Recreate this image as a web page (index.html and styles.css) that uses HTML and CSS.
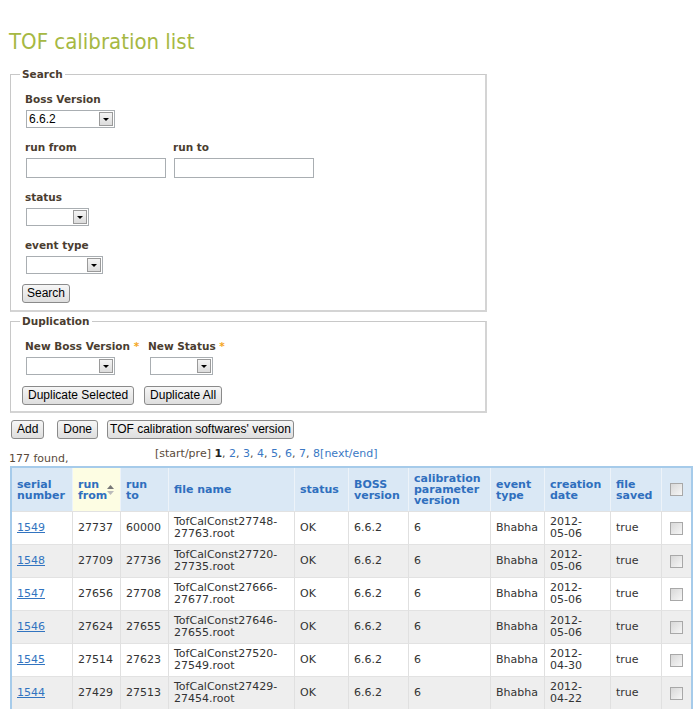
FILE: index.html
```html
<!DOCTYPE html>
<html lang="en">
<head>
<meta charset="utf-8">
<title>TOF calibration list</title>
<link rel="stylesheet" href="styles.css">
</head>
<body>
<h1 class="title">TOF calibration list</h1>

<fieldset class="box search">
  <legend>Search</legend>
  <div class="field">
    <label>Boss Version</label>
    <span class="sel sel-boss"><span class="sel-val">6.6.2</span><span class="sel-btn"></span></span>
  </div>
  <div class="field pair">
    <div class="col">
      <label>run from</label>
      <input class="txt" type="text">
    </div>
    <div class="col">
      <label>run to</label>
      <input class="txt" type="text">
    </div>
  </div>
  <div class="field">
    <label>status</label>
    <span class="sel sel-status"><span class="sel-val"></span><span class="sel-btn"></span></span>
  </div>
  <div class="field field-last">
    <label>event type</label>
    <span class="sel sel-event"><span class="sel-val"></span><span class="sel-btn"></span></span>
  </div>
  <div class="actions">
    <button class="btn" type="button">Search</button>
  </div>
</fieldset>

<fieldset class="box dup">
  <legend>Duplication</legend>
  <div class="field dup-row">
    <div class="col col-boss">
      <label>New Boss Version <span class="req">*</span></label>
      <span class="sel sel-boss"><span class="sel-val"></span><span class="sel-btn"></span></span>
    </div>
    <div class="col col-status">
      <label>New Status <span class="req">*</span></label>
      <span class="sel sel-status"><span class="sel-val"></span><span class="sel-btn"></span></span>
    </div>
  </div>
  <div class="actions dup-actions">
    <button class="btn" type="button">Duplicate Selected</button>
    <button class="btn" type="button">Duplicate All</button>
  </div>
</fieldset>

<div class="toolbar">
  <button class="btn btn-add" type="button">Add</button>
  <button class="btn" type="button">Done</button>
  <button class="btn btn-wide" type="button">TOF calibration softwares' version</button>
</div>

<div class="summary">
  <span class="found">177 found,</span>
  <span class="pager">[start/pre] <b>1</b>, <a href="#">2</a>, <a href="#">3</a>, <a href="#">4</a>, <a href="#">5</a>, <a href="#">6</a>, <a href="#">7</a>, <a href="#">8</a><a href="#">[next/end]</a></span>
</div>

<table class="grid">
  <thead>
    <tr>
      <th class="c-serial">serial number</th>
      <th class="c-from sorted">run from<span class="sort"><svg width="7" height="12" viewBox="0 0 7 12"><path d="M3.5 1 L7 5 L0 5 Z" fill="#777"/><path d="M0 7 L7 7 L3.5 11 Z" fill="#bbb"/></svg></span></th>
      <th class="c-to">run to</th>
      <th class="c-file">file name</th>
      <th class="c-status">status</th>
      <th class="c-boss">BOSS version</th>
      <th class="c-param">calibration parameter version</th>
      <th class="c-event">event type</th>
      <th class="c-date">creation date</th>
      <th class="c-saved">file saved</th>
      <th class="c-check"><span class="chk"></span></th>
    </tr>
  </thead>
  <tbody>
    <tr>
      <td><a href="#">1549</a></td><td>27737</td><td>60000</td><td>TofCalConst27748-<br>27763.root</td><td>OK</td><td>6.6.2</td><td>6</td><td>Bhabha</td><td>2012-<br>05-06</td><td>true</td><td class="cc"><span class="chk"></span></td>
    </tr>
    <tr>
      <td><a href="#">1548</a></td><td>27709</td><td>27736</td><td>TofCalConst27720-<br>27735.root</td><td>OK</td><td>6.6.2</td><td>6</td><td>Bhabha</td><td>2012-<br>05-06</td><td>true</td><td class="cc"><span class="chk"></span></td>
    </tr>
    <tr>
      <td><a href="#">1547</a></td><td>27656</td><td>27708</td><td>TofCalConst27666-<br>27677.root</td><td>OK</td><td>6.6.2</td><td>6</td><td>Bhabha</td><td>2012-<br>05-06</td><td>true</td><td class="cc"><span class="chk"></span></td>
    </tr>
    <tr>
      <td><a href="#">1546</a></td><td>27624</td><td>27655</td><td>TofCalConst27646-<br>27655.root</td><td>OK</td><td>6.6.2</td><td>6</td><td>Bhabha</td><td>2012-<br>05-06</td><td>true</td><td class="cc"><span class="chk"></span></td>
    </tr>
    <tr>
      <td><a href="#">1545</a></td><td>27514</td><td>27623</td><td>TofCalConst27520-<br>27549.root</td><td>OK</td><td>6.6.2</td><td>6</td><td>Bhabha</td><td>2012-<br>04-30</td><td>true</td><td class="cc"><span class="chk"></span></td>
    </tr>
    <tr>
      <td><a href="#">1544</a></td><td>27429</td><td>27513</td><td>TofCalConst27429-<br>27454.root</td><td>OK</td><td>6.6.2</td><td>6</td><td>Bhabha</td><td>2012-<br>04-22</td><td>true</td><td class="cc"><span class="chk"></span></td>
    </tr>
  </tbody>
</table>
</body>
</html>
```

FILE: styles.css
```css
html, body {
  margin: 0;
  padding: 0;
  background: #fff;
}

body {
  font-family: "DejaVu Sans", Verdana, sans-serif;
  font-size: 11px;
  color: #333;
}

.title {
  margin: 29px 0 12px 9px;
  font-family: "DejaVu Sans Condensed", "DejaVu Sans", sans-serif;
  font-weight: normal;
  font-size: 22px;
  line-height: 26px;
  color: #a6b843;
}

/* fieldset panels */
.box {
  box-sizing: border-box;
  width: 477px;
  margin: 0 0 0 10px;
  padding: 11px 8px 6px 11px;
  border: 1px solid #c8c8c8;
  border-right: 2px solid #d4d4d4;
  border-bottom: 2px solid #d4d4d4;
}

.box legend {
  margin-left: -2px;
  padding: 0 2px;
  font-weight: bold;
  font-size: 10.5px;
  line-height: 14px;
  color: #4a3d30;
}

.search {
  padding-bottom: 7px;
}

.dup {
  margin-top: 2px;
}

.field {
  padding-left: 3px;
  margin-bottom: 12px;
}

.field-last {
  margin-bottom: 10px;
}

.field label {
  display: block;
  font-weight: bold;
  font-size: 10.5px;
  line-height: 14px;
  color: #4a3d30;
  margin-bottom: 4px;
}

.field .sel,
.field .txt {
  margin-left: 1px;
}

.pair {
  display: flex;
  gap: 7px;
}

.pair .col {
  width: 141px;
  display: flex;
  flex-direction: column;
  align-items: flex-start;
}

.dup-row {
  display: flex;
  margin-bottom: 11px;
}

.col-boss {
  width: 123px;
}

.col-status .sel {
  margin-left: 2px;
}

.req {
  color: #f5a623;
}

/* text input */
.txt {
  box-sizing: border-box;
  width: 140px;
  height: 20px;
  border: 1px solid #a9aeb2;
  padding: 0 2px;
  font: 12px "Liberation Sans", Arial, sans-serif;
}

/* drop-down list */
.sel {
  box-sizing: border-box;
  display: inline-flex;
  height: 18px;
  border: 1px solid #a9aeb2;
  background: #fff;
  vertical-align: top;
}

.sel-boss { width: 89px; }
.sel-status { width: 63px; }
.sel-event { width: 77px; }

.sel-val {
  flex: 1;
  padding-left: 2px;
  font: 12px/16px "Liberation Sans", Arial, sans-serif;
  color: #000;
}

.sel-btn {
  position: relative;
  box-sizing: border-box;
  width: 14px;
  height: 14px;
  margin: 1px;
  border: 1px solid #9a9a9a;
  background: linear-gradient(#f4f4f4, #dcdcdc);
}

.sel-btn::after {
  content: "";
  position: absolute;
  left: 3px;
  top: 5px;
  border-left: 3px solid transparent;
  border-right: 3px solid transparent;
  border-top: 3px solid #000;
}

/* buttons */
.btn {
  box-sizing: border-box;
  height: 19px;
  padding: 0 4px;
  margin: 0;
  border: 1px solid #8a8a8a;
  border-radius: 3px;
  background: linear-gradient(#f6f6f6, #dedede);
  font: 12px/15px "Liberation Sans", Arial, sans-serif;
  color: #000;
  vertical-align: top;
}

.dup-actions {
  display: flex;
  gap: 10px;
}

.dup-actions .btn {
  padding: 0 5px;
}

.toolbar {
  display: flex;
  gap: 9px;
  margin: 7px 0 0 11px;
}

.toolbar .btn {
  padding: 0 5px;
}

.toolbar .btn-add {
  margin-right: 4px;
}

.toolbar .btn-wide {
  padding: 0 2px;
}

/* result count and pager */
.summary {
  display: flex;
  align-items: flex-start;
  margin: 8px 0 0 9px;
  height: 19px;
  color: #5a4a3a;
}

.found {
  padding-top: 5px;
  width: 146px;
}

.pager {
  color: #5a4a3a;
}

.pager b {
  color: #222;
}

.pager a {
  color: #3a78c4;
  text-decoration: none;
}

/* data table */
.grid {
  box-sizing: border-box;
  width: 683px;
  margin-left: 10px;
  table-layout: fixed;
  border-collapse: separate;
  border-spacing: 0;
  border: 2px solid #a6cbea;
  border-bottom: 0;
}

.grid th,
.grid td {
  box-sizing: border-box;
  padding: 0 5px;
  text-align: left;
  vertical-align: middle;
  border-left: 1px solid #e0e0e0;
  line-height: 12px;
}

.grid th:first-child,
.grid td:first-child {
  border-left: 0;
}

.grid th {
  position: relative;
  height: 43px;
  background: #dae8f5;
  border-left-color: #edf3f9;
  color: #2f6fbe;
  font-weight: bold;
  font-size: 11px;
  line-height: 11px;
}

.grid th.sorted {
  background: #fdfde3;
}

.sort {
  position: absolute;
  right: 6px;
  top: 16px;
  line-height: 0;
}

.grid td {
  height: 33px;
  border-top: 1px solid #e2e2e2;
  color: #333;
}

.grid tbody tr:nth-child(even) td {
  background: #eeeeee;
}

.grid td a {
  color: #3274c0;
}

.c-serial { width: 60px; }
.c-from { width: 48px; }
.c-to { width: 48px; }
.c-file { width: 126px; }
.c-status { width: 54px; }
.c-boss { width: 60px; }
.c-param { width: 82px; }
.c-event { width: 54px; }
.c-date { width: 66px; }
.c-saved { width: 51px; }
.c-check { width: 30px; }

.grid .c-check,
.grid .cc {
  text-align: center;
  padding: 0;
}

.chk {
  display: inline-block;
  box-sizing: border-box;
  width: 13px;
  height: 13px;
  border: 1px solid #a8a8a8;
  background: linear-gradient(135deg, #d8d8d8, #f6f6f6);
  vertical-align: middle;
}
```
